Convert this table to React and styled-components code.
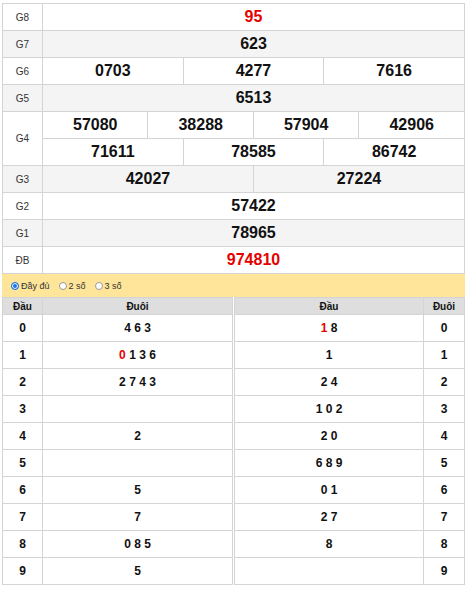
import React from 'react'
import styled, { createGlobalStyle } from 'styled-components'

const GlobalStyle = createGlobalStyle`
  body {
    margin: 0;
    background: #fff;
    font-family: "Liberation Sans", Arial, sans-serif;
  }
`;

const Wrapper = styled.div`
  width: 463px;
  margin: 3px 0 0 2px;
`;

const Table = styled.table`
  width: 100%;
  border-collapse: collapse;
  table-layout: fixed;
`;

const Col = styled.col`
  width: ${p => p.$w || 'auto'};
`;

const Row = styled.tr`
  background: ${p => (p.$alt ? '#f4f4f4' : '#fff')};
`;

const Label = styled.td`
  height: 26px;
  padding: 0;
  border: 1px solid #d4d4d4;
  text-align: center;
  font-size: 10px;
  color: #333;
`;

const Prize = styled.td`
  height: 26px;
  padding: 0;
  border: 1px solid #d4d4d4;
  text-align: center;
  font-size: 16px;
  font-weight: bold;
  color: ${p => (p.$red ? '#e50000' : '#111')};
`;

const FilterBar = styled.div`
  height: 23px;
  background: #ffe599;
  display: flex;
  align-items: center;
  gap: 9px;
  padding-left: 9px;
  font-size: 9px;
  color: #333;
`;

const Option = styled.label`
  display: flex;
  align-items: center;
  gap: 2px;
`;

const Radio = styled.span`
  width: 6px;
  height: 6px;
  border-radius: 50%;
  border: 1px solid ${p => (p.$checked ? '#1a73e8' : '#9a9a9a')};
  background: ${p => (p.$checked ? '#1a73e8' : '#fff')};
  box-shadow: ${p => (p.$checked ? 'inset 0 0 0 1px #fff' : 'none')};
`;

const LotoWrap = styled.div`
  display: flex;
  gap: 1px;
`;

const LotoTable = styled(Table)`
  flex: 1;
`;

const Head = styled.th`
  height: 16px;
  padding: 0;
  background: #dedede;
  border: 1px solid #d4d4d4;
  font-size: 10px;
  font-weight: bold;
  color: #111;
`;

const Cell = styled.td`
  height: 26px;
  padding: 0;
  border: 1px solid #d4d4d4;
  text-align: center;
  font-size: 12px;
  font-weight: bold;
  color: #111;
`;

const Digit = styled.span`
  color: ${p => (p.$red ? '#e50000' : 'inherit')};
`;

const prizes = [
  { label: 'G8', rows: [['95']], red: true },
  { label: 'G7', rows: [['623']], alt: true },
  { label: 'G6', rows: [['0703', '4277', '7616']] },
  { label: 'G5', rows: [['6513']], alt: true },
  { label: 'G4', rows: [['57080', '38288', '57904', '42906'], ['71611', '78585', '86742']] },
  { label: 'G3', rows: [['42027', '27224']], alt: true },
  { label: 'G2', rows: [['57422']] },
  { label: 'G1', rows: [['78965']], alt: true },
  { label: 'ĐB', rows: [['974810']], red: true },
];

// each digit list: [digits, index of red digit]
const dauList = [
  [['4', '6', '3']],
  [['0', '1', '3', '6'], 0],
  [['2', '7', '4', '3']],
  [[]],
  [['2']],
  [[]],
  [['5']],
  [['7']],
  [['0', '8', '5']],
  [['5']],
];

const duoiList = [
  [['1', '8'], 0],
  [['1']],
  [['2', '4']],
  [['1', '0', '2']],
  [['2', '0']],
  [['6', '8', '9']],
  [['0', '1']],
  [['2', '7']],
  [['8']],
  [[]],
];

function Digits({ list, red }) {
  return list.map((d, i) => (
    <React.Fragment key={i}>
      {i > 0 && ' '}
      <Digit $red={i === red}>{d}</Digit>
    </React.Fragment>
  ));
}

function PrizeTable() {
  return (
    <Table>
      <colgroup>
        <Col $w="40px" />
        {Array.from({ length: 12 }).map((_, i) => <Col key={i} />)}
      </colgroup>
      <tbody>
        {prizes.map(p =>
          p.rows.map((nums, ri) => (
            <Row key={p.label + ri} $alt={p.alt}>
              {ri === 0 && <Label rowSpan={p.rows.length}>{p.label}</Label>}
              {nums.map(n => (
                <Prize key={n} colSpan={12 / nums.length} $red={p.red}>{n}</Prize>
              ))}
            </Row>
          ))
        )}
      </tbody>
    </Table>
  );
}

function Filter() {
  return (
    <FilterBar>
      <Option><Radio $checked />Đầy đủ</Option>
      <Option><Radio />2 số</Option>
      <Option><Radio />3 số</Option>
    </FilterBar>
  );
}

function Loto() {
  return (
    <LotoWrap>
      <LotoTable>
        <colgroup>
          <Col $w="40px" />
          <Col />
        </colgroup>
        <thead>
          <tr><Head>Đầu</Head><Head>Đuôi</Head></tr>
        </thead>
        <tbody>
          {dauList.map(([list, red], i) => (
            <tr key={i}>
              <Cell>{i}</Cell>
              <Cell><Digits list={list} red={red} /></Cell>
            </tr>
          ))}
        </tbody>
      </LotoTable>
      <LotoTable>
        <colgroup>
          <Col />
          <Col $w="41px" />
        </colgroup>
        <thead>
          <tr><Head>Đầu</Head><Head>Đuôi</Head></tr>
        </thead>
        <tbody>
          {duoiList.map(([list, red], i) => (
            <tr key={i}>
              <Cell><Digits list={list} red={red} /></Cell>
              <Cell>{i}</Cell>
            </tr>
          ))}
        </tbody>
      </LotoTable>
    </LotoWrap>
  );
}

export default function App() {
  return (
    <>
      <GlobalStyle />
      <Wrapper>
        <PrizeTable />
        <Filter />
        <Loto />
      </Wrapper>
    </>
  );
}
